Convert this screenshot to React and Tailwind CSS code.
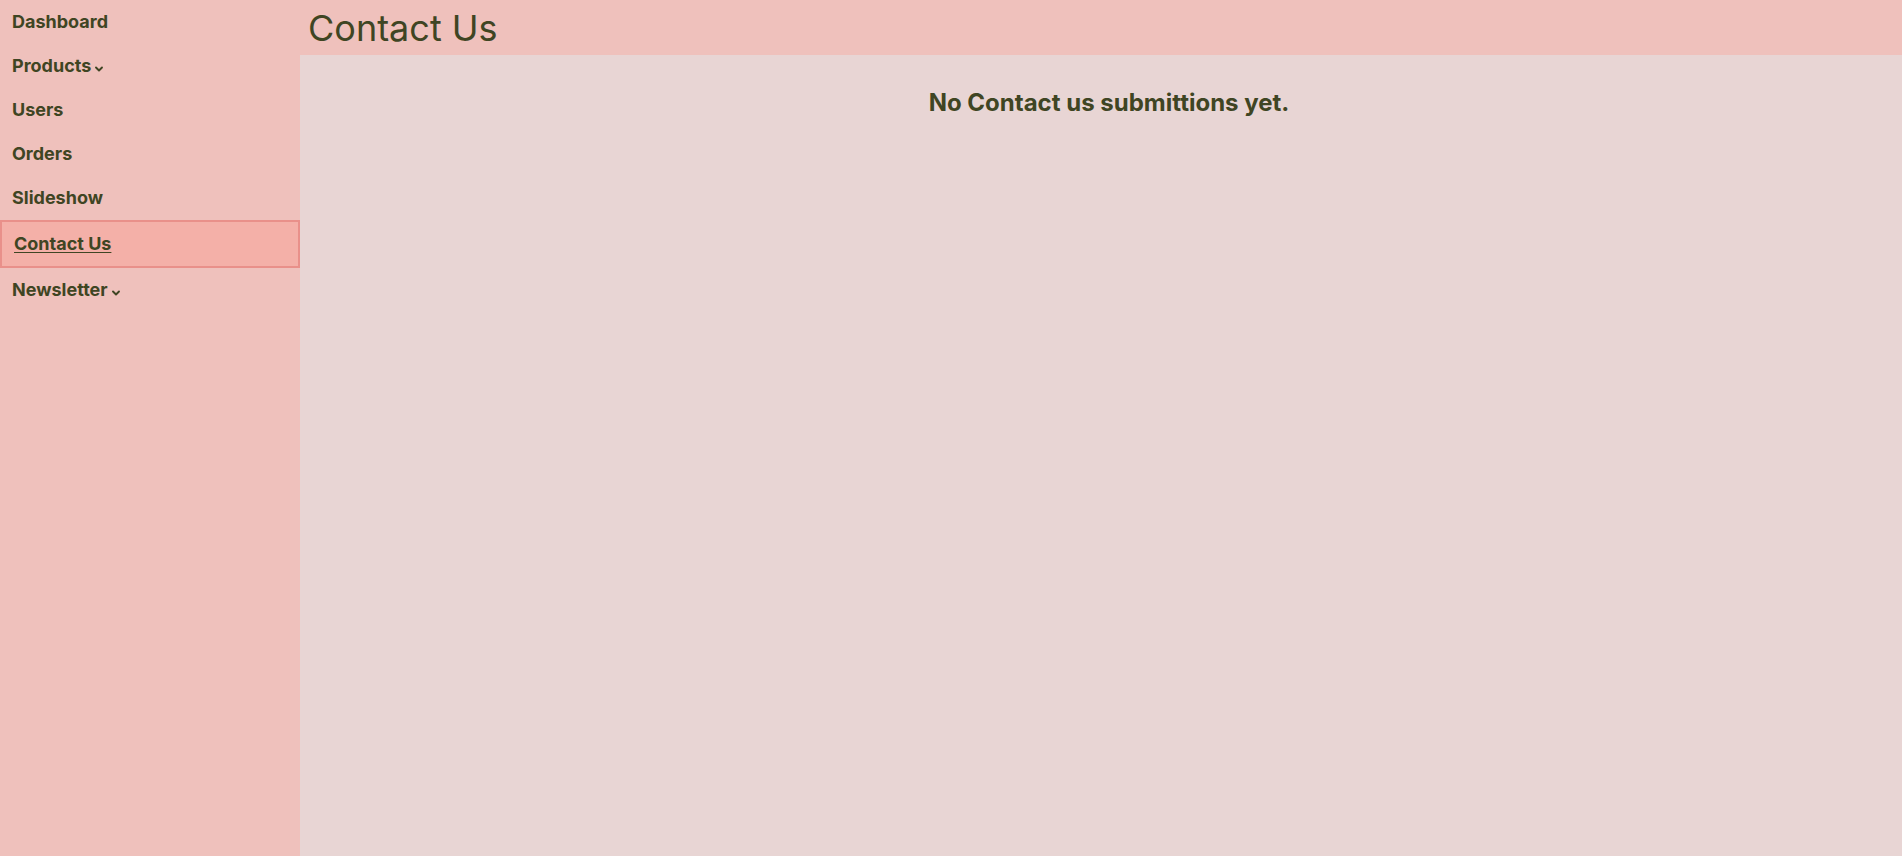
import { useState } from 'react'

const NAV = [
  { label: 'Dashboard' },
  { label: 'Products', dropdown: true },
  { label: 'Users' },
  { label: 'Orders' },
  { label: 'Slideshow' },
  { label: 'Contact Us', active: true },
  { label: 'Newsletter', dropdown: true },
]

function Chevron() {
  return (
    <svg width="10" height="10" viewBox="0 0 10 10" className="ml-[3px] mt-[6px]" aria-hidden="true">
      <path d="M2 3.5 L5 6.5 L8 3.5" fill="none" stroke="currentColor" strokeWidth="1.9" strokeLinecap="round" strokeLinejoin="round" />
    </svg>
  )
}

function Sidebar() {
  const [active] = useState('Contact Us')
  return (
    <aside className="w-[300px] shrink-0 bg-[#efc1bc] min-h-screen">
      <ul className="flex flex-col">
        {NAV.map((item) => {
          const isActive = item.label === active
          return (
            <li
              key={item.label}
              className={
                isActive
                  ? 'flex items-center px-3 py-2 border-2 border-[#e9908a] bg-[#f4b0a8]'
                  : 'flex items-center px-3 py-2'
              }
            >
              <a
                href="#"
                className={
                  isActive
                    ? 'text-[18px] leading-7 font-bold text-[#3f4523] underline underline-offset-2'
                    : 'text-[18px] leading-7 font-bold text-[#3f4523]'
                }
              >
                {item.label}
              </a>
              {item.dropdown && (
                <span className="text-[#3f4523]">
                  <Chevron />
                </span>
              )}
            </li>
          )
        })}
      </ul>
    </aside>
  )
}

export default function App() {
  return (
    <div className="flex min-h-screen font-['Inter','Noto_Sans',sans-serif] text-[#3f4523]">
      <Sidebar />
      <div className="flex-1 flex flex-col">
        <header className="h-[55px] bg-[#efc1bc] flex items-center px-2">
          <h1 className="text-[36px] leading-none font-normal">Contact Us</h1>
        </header>
        <main className="flex-1 bg-[#e8d5d4] pt-[32px]">
          <h2 className="text-center text-[24px] leading-8 font-bold pl-4">
            No Contact us submittions yet.
          </h2>
        </main>
      </div>
    </div>
  )
}
